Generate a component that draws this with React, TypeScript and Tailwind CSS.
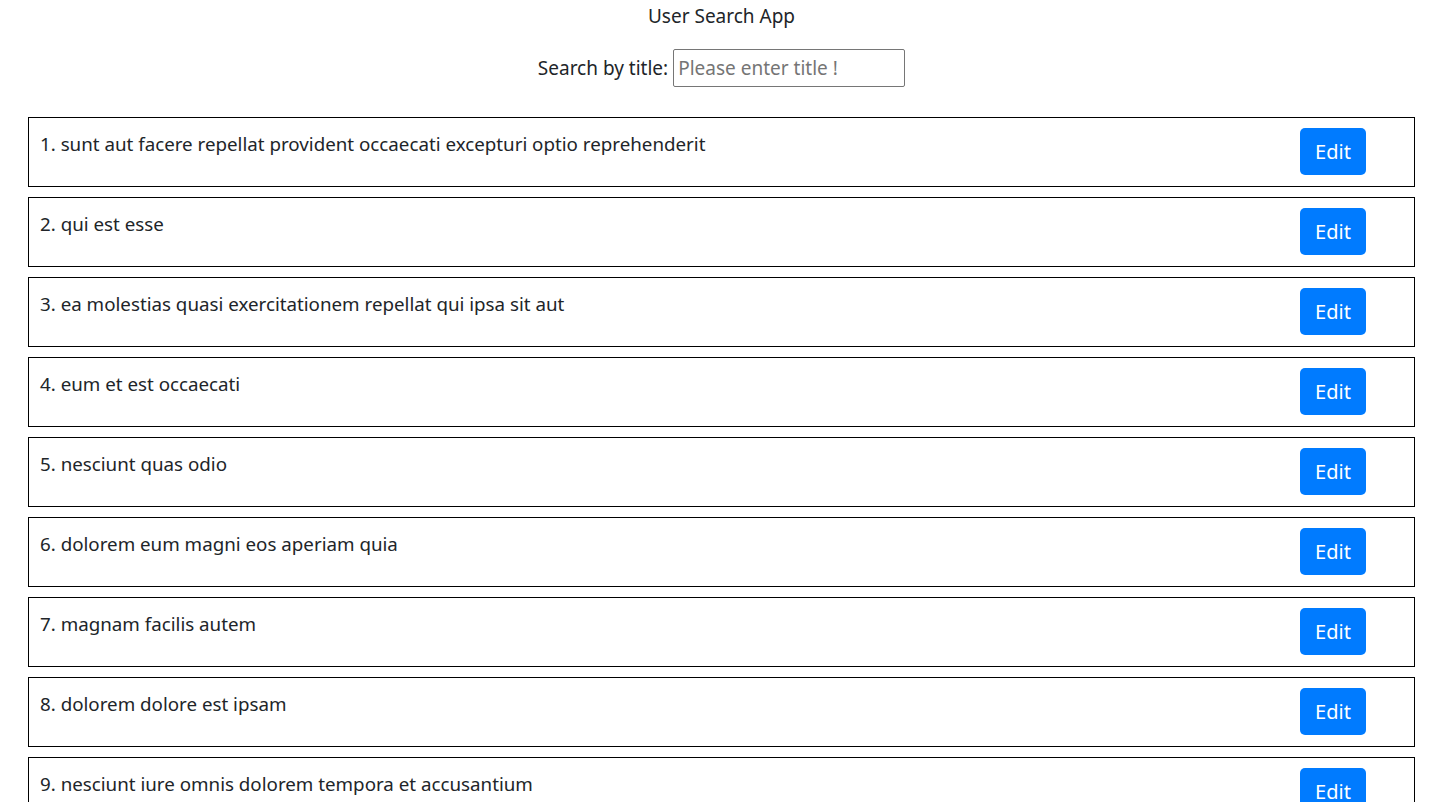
import { useState } from 'react';

const posts = [
  'sunt aut facere repellat provident occaecati excepturi optio reprehenderit',
  'qui est esse',
  'ea molestias quasi exercitationem repellat qui ipsa sit aut',
  'eum et est occaecati',
  'nesciunt quas odio',
  'dolorem eum magni eos aperiam quia',
  'magnam facilis autem',
  'dolorem dolore est ipsam',
  'nesciunt iure omnis dolorem tempora et accusantium',
  'optio molestias id quia eum',
];

export default function App() {
  const [query, setQuery] = useState('');

  const filtered = posts.filter((p) => p.toLowerCase().includes(query.toLowerCase()));

  return (
    <div
      className="ml-[28px] mr-[21px] text-[#212529] text-[19px] leading-[30px]"
      style={{ fontFamily: '"Noto Sans", "Open Sans", sans-serif' }}
    >
      <div className="text-center pt-[1px] h-[30px]">User Search App</div>
      <div className="flex items-center justify-center gap-[5px] mt-[19px]">
        <label htmlFor="search">Search by title:</label>
        <input
          id="search"
          value={query}
          onChange={(e) => setQuery(e.target.value)}
          placeholder="Please enter title !"
          className="w-[232px] h-[38px] border border-[#767676] rounded-[2px] px-[4px] text-[19px] placeholder:text-[#757575] outline-none"
        />
      </div>
      <div className="mt-[30px] flex flex-col gap-[10px]">
        {filtered.map((title) => (
          <div
            key={title}
            className="h-[70px] border border-black flex justify-between items-start pl-[11px] pr-[48px] pt-[10px]"
          >
            <span className="pt-[1px] text-[18.75px]">
              {posts.indexOf(title) + 1}. {title}
            </span>
            <button className="w-[66px] h-[47px] bg-[#007bff] text-white rounded-[5px] text-[20px] pt-[1px]">
              Edit
            </button>
          </div>
        ))}
      </div>
    </div>
  );
}
